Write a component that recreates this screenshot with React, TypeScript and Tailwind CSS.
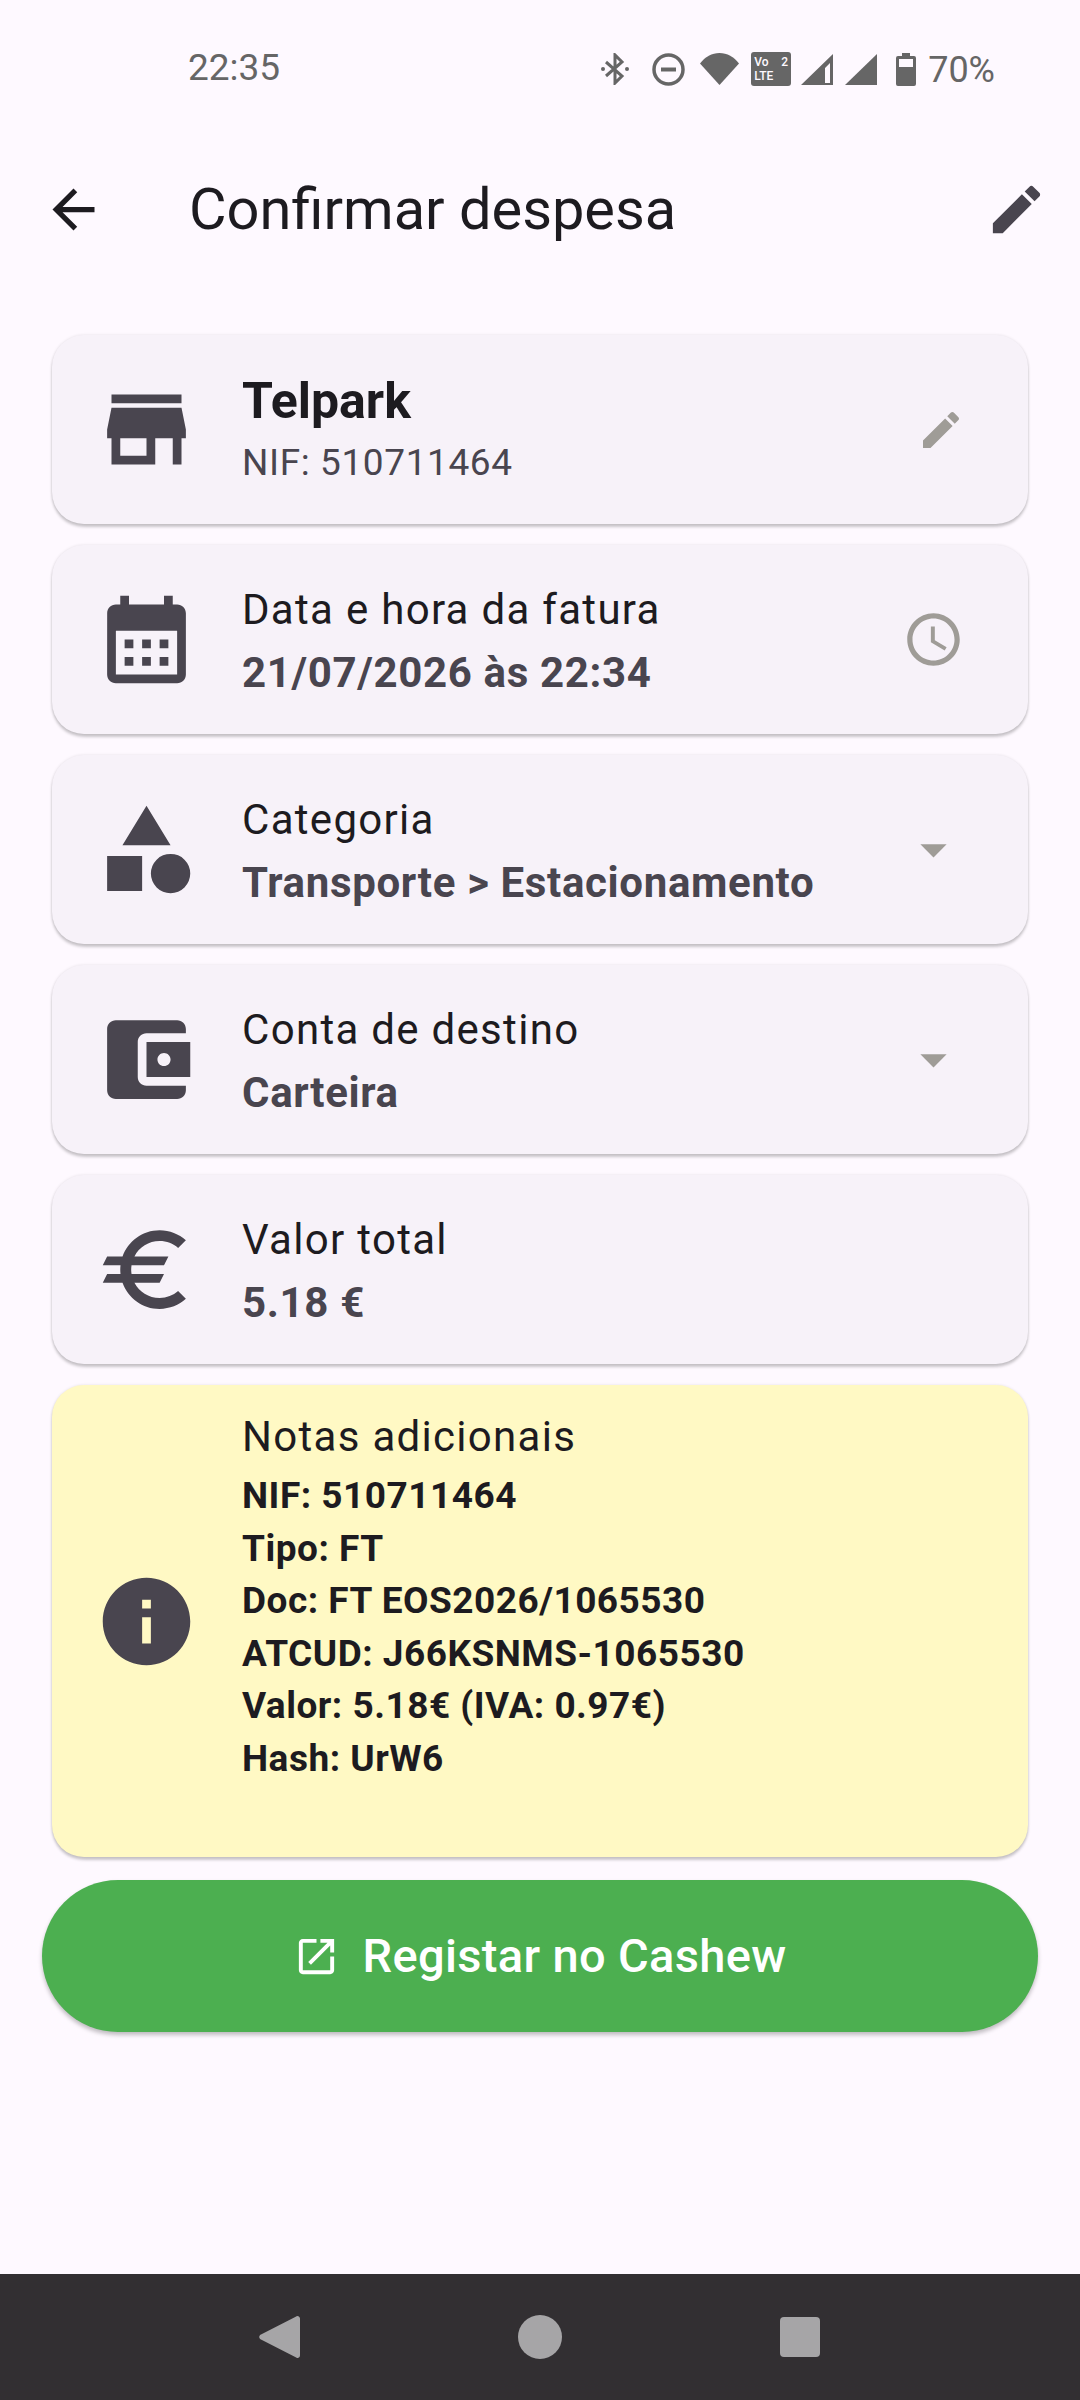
import type { ReactNode } from 'react'

const ICONS = {
  store: 'M20 4H4v2h16V4zm1 10v-2l-1-5H4l-1 5v2h1v6h10v-6h4v6h2v-6h1zm-9 4H6v-4h6v4z',
  calendar:
    'M19 4h-1V2h-2v2H8V2H6v2H5c-1.11 0-1.99.9-1.99 2L3 20c0 1.1.89 2 2 2h14c1.1 0 2-.9 2-2V6c0-1.1-.9-2-2-2zm0 16H5V10h14v10zM9 14H7v-2h2v2zm4 0h-2v-2h2v2zm4 0h-2v-2h2v2zm-8 4H7v-2h2v2zm4 0h-2v-2h2v2zm4 0h-2v-2h2v2z',
  category:
    'M12 2l-5.5 9h11zM17.5 13a4.5 4.5 0 1 0 0 9a4.5 4.5 0 1 0 0-9zM3 13.5h8v8H3z',
  wallet:
    'M21 18v1c0 1.1-.9 2-2 2H5c-1.11 0-2-.9-2-2V5c0-1.1.89-2 2-2h14c1.1 0 2 .9 2 2v1h-9c-1.11 0-2 .9-2 2v8c0 1.1.89 2 2 2h9zm-9-2h10V8H12v8zm4-2.5c-.83 0-1.5-.67-1.5-1.5s.67-1.5 1.5-1.5 1.5.67 1.5 1.5-.67 1.5-1.5 1.5z',
  euro:
    'M15 18.5c-2.51 0-4.68-1.42-5.76-3.5H15l1-2H8.58c-.05-.33-.08-.66-.08-1s.03-.67.08-1H16l1-2H9.24C10.32 6.92 12.5 5.5 15 5.5c1.61 0 3.09.59 4.23 1.57L21 5.3C19.41 3.87 17.3 3 15 3c-3.92 0-7.24 2.51-8.48 6H3l-1 2h4.06c-.04.33-.06.66-.06 1 0 .34.02.67.06 1H3l-1 2h4.52c1.24 3.49 4.56 6 8.48 6 2.31 0 4.41-.87 6-2.3l-1.78-1.77c-1.13.98-2.6 1.57-4.2 1.57z',
  info: 'M12 2C6.48 2 2 6.48 2 12s4.48 10 10 10 10-4.48 10-10S17.52 2 12 2zm1 15h-2v-6h2v6zm0-8h-2V7h2v2z',
  edit: 'M3 17.25V21h3.75L17.81 9.94l-3.75-3.75L3 17.25zM20.71 7.04c.39-.39.39-1.02 0-1.41l-2.34-2.34c-.39-.39-1.02-.39-1.41 0l-1.83 1.83 3.75 3.75 1.83-1.83z',
  clock:
    'M11.99 2C6.47 2 2 6.48 2 12s4.47 10 9.99 10C17.52 22 22 17.52 22 12S17.52 2 11.99 2zM12 20c-4.42 0-8-3.58-8-8s3.58-8 8-8 8 3.58 8 8-3.58 8-8 8zM12.5 7H11v6l5.25 3.15.75-1.23-4.5-2.67z',
  dropdown: 'M7 10l5 5 5-5z',
  back: 'M20 11H7.83l5.59-5.59L12 4l-8 8 8 8 1.41-1.41L7.83 13H20v-2z',
  open: 'M19 19H5V5h7V3H5c-1.11 0-2 .9-2 2v14c0 1.1.89 2 2 2h14c1.1 0 2-.9 2-2v-7h-2v7zM14 3v2h3.59l-9.83 9.83 1.41 1.41L19 6.41V10h2V3h-7z',
}

function Icon({ d, className }: { d: string; className: string }) {
  return (
    <svg viewBox="0 0 24 24" fill="currentColor" className={`shrink-0 ${className}`}>
      <path d={d} />
    </svg>
  )
}

function StatusBar() {
  return (
    <div className="flex h-[105px] items-end pb-[16px] pl-[188px] text-[#666666]">
      <span className="text-[37px] leading-[44px] relative top-[1px]">22:35</span>
      <div className="ml-auto mr-[85px] flex items-center">
        {/* bluetooth */}
        <svg viewBox="0 0 28 32" className="h-[32px] w-[28px]" fill="none" stroke="currentColor" strokeWidth="3">
          <path d="M5 9l16 14-7 7V2l7 7L5 23" />
          <circle cx="2" cy="16" r="2" fill="currentColor" stroke="none" />
          <circle cx="26" cy="16" r="2" fill="currentColor" stroke="none" />
        </svg>
        {/* do not disturb */}
        <svg viewBox="0 0 33 33" className="ml-[23px] h-[33px] w-[33px]" fill="none" stroke="currentColor">
          <circle cx="16.5" cy="16.5" r="14.5" strokeWidth="3.5" />
          <path d="M9 16.5h15" strokeWidth="4" />
        </svg>
        {/* wifi */}
        <svg viewBox="0 0 39 32" className="ml-[15px] h-[32px] w-[39px]" fill="currentColor">
          <path d="M0 10.5C5 4 12 0 19.500 0S34 4 39 10.500L19.500 32z" />
        </svg>
        {/* volte */}
        <div className="ml-[12px] flex h-[34px] w-[40px] flex-col justify-center rounded-[3px] bg-[#666666] px-[3px] text-[12px] leading-[14px] font-medium text-[#fef9ff]">
          <div className="flex justify-between">
            <span>Vo</span>
            <span>2</span>
          </div>
          <span>LTE</span>
        </div>
        {/* signal 1 */}
        <svg viewBox="0 0 32 31" className="ml-[10px] h-[31px] w-[32px]" fill="currentColor">
          <path fillRule="evenodd" d="M0 31L32 0v31zM24 29h5V9l-5 5z" />
        </svg>
        {/* signal 2 */}
        <svg viewBox="0 0 32 31" className="ml-[12px] h-[31px] w-[32px]" fill="currentColor">
          <path d="M0 31L32 0v31z" />
        </svg>
        {/* battery */}
        <svg viewBox="0 0 20 33" className="ml-[19px] h-[33px] w-[20px]" fill="currentColor">
          <path
            fillRule="evenodd"
            d="M6 0h8v3h4a2 2 0 0 1 2 2v26a2 2 0 0 1-2 2H2a2 2 0 0 1-2-2V5a2 2 0 0 1 2-2h4zM3 6v8h14V6z"
          />
        </svg>
        <span className="ml-[12px] text-[36px] leading-[40px] relative top-[1px]">70%</span>
      </div>
    </div>
  )
}

function AppBar() {
  return (
    <div className="flex h-[208px] items-center pl-[42px] pr-[32px] text-[#1d1b20]">
      <Icon d={ICONS.back} className="h-[63px] w-[63px]" />
      <h1 className="ml-[84px] text-[57.75px] leading-[72px] font-normal">Confirmar despesa</h1>
      <Icon d={ICONS.edit} className="ml-auto h-[63px] w-[63px] text-[#49454f]" />
    </div>
  )
}

function Card({ icon, children, action }: { icon: string; children: ReactNode; action?: ReactNode }) {
  return (
    <div className="flex h-[189px] items-center gap-[43px] rounded-[32px] bg-[#f7f2f9] pl-[42px] pr-[63px] shadow-[0_3px_3px_rgba(0,0,0,0.2),0_0_3px_rgba(0,0,0,0.1)]">
      <Icon d={icon} className="h-[105px] w-[105px] text-[#49454f]" />
      <div className="flex-1">{children}</div>
      {action}
    </div>
  )
}

function LabelValue({ label, value }: { label: string; value: string }) {
  return (
    <div className="pt-[3px]">
      <p className="text-[42px] leading-[63px] tracking-[1.3px] text-[#1d1b20]">{label}</p>
      <p className="text-[42px] leading-[63px] tracking-[0.65px] font-bold text-[#49454f]">{value}</p>
    </div>
  )
}

const noteLines = [
  'NIF: 510711464',
  'Tipo: FT',
  'Doc: FT EOS2026/1065530',
  'ATCUD: J66KSNMS-1065530',
  'Valor: 5.18€ (IVA: 0.97€)',
  'Hash: UrW6',
]

export default function App() {
  return (
    <div className="flex h-[2400px] w-[1080px] flex-col overflow-hidden bg-[#fef9ff] font-['Roboto',sans-serif]">
      <StatusBar />
      <AppBar />

      <div className="mt-[22px] flex flex-col gap-[21px] px-[52px]">
        <Card icon={ICONS.store} action={<Icon d={ICONS.edit} className="h-[48px] w-[48px] text-[#9f9c97]" />}>
          <p className="mb-[5px] text-[50px] leading-[62px] font-bold text-[#1d1b20]">Telpark</p>
          <p className="text-[37px] leading-[52px] tracking-[0.6px] text-[#49454f]">NIF: 510711464</p>
        </Card>
        <Card icon={ICONS.calendar} action={<Icon d={ICONS.clock} className="h-[63px] w-[63px] text-[#9f9c97]" />}>
          <LabelValue label="Data e hora da fatura" value="21/07/2026 às 22:34" />
        </Card>
        <Card icon={ICONS.category} action={<Icon d={ICONS.dropdown} className="h-[63px] w-[63px] text-[#9f9c97]" />}>
          <LabelValue label="Categoria" value="Transporte > Estacionamento" />
        </Card>
        <Card icon={ICONS.wallet} action={<Icon d={ICONS.dropdown} className="h-[63px] w-[63px] text-[#9f9c97]" />}>
          <LabelValue label="Conta de destino" value="Carteira" />
        </Card>
        <Card icon={ICONS.euro}>
          <LabelValue label="Valor total" value="5.18 €" />
        </Card>

        {/* Notes */}
        <div className="flex h-[472px] items-center gap-[43px] rounded-[32px] bg-[#fff9c4] pl-[42px] pr-[63px] shadow-[0_3px_3px_rgba(0,0,0,0.2),0_0_3px_rgba(0,0,0,0.1)]">
          <Icon d={ICONS.info} className="h-[105px] w-[105px] text-[#49454f]" />
          <div className="flex-1 pb-[52px]">
            <p className="mb-[2px] text-[42px] leading-[63px] tracking-[1.3px] text-[#1d1b20]">Notas adicionais</p>
            {noteLines.map((line) => (
              <p key={line} className="text-[37px] leading-[52.500px] tracking-[0.5px] font-bold text-[#1d1b20]">
                {line}
              </p>
            ))}
          </div>
        </div>
      </div>

      <button className="mx-[42px] mt-[23px] flex h-[152px] items-center justify-center gap-[22px] rounded-full bg-[#4caf50] text-[47px] tracking-[0.35px] font-medium text-white shadow-[0_3px_4px_rgba(0,0,0,0.25)]">
        <Icon d={ICONS.open} className="h-[47px] w-[47px]" />
        <span>Registar no Cashew</span>
      </button>

      {/* Navigation bar */}
      <div className="mt-auto flex h-[126px] items-center justify-center gap-[216px] bg-[#322f32] text-[#a6a5a7]">
        <svg viewBox="0 0 44 44" className="h-[44px] w-[44px]" fill="currentColor">
          <path d="M42 3.500v37a2.500 2.500 0 0 1-4.300 1.700L2 24a3 3 0 0 1 0-4L37.700 1.800A2.500 2.500 0 0 1 42 3.500z" />
        </svg>
        <div className="h-[44px] w-[44px] rounded-full bg-[#a6a5a7]" />
        <div className="flex h-[44px] w-[44px] items-center justify-center">
          <div className="h-[40px] w-[40px] rounded-[4px] bg-[#a6a5a7]" />
        </div>
      </div>
    </div>
  )
}
